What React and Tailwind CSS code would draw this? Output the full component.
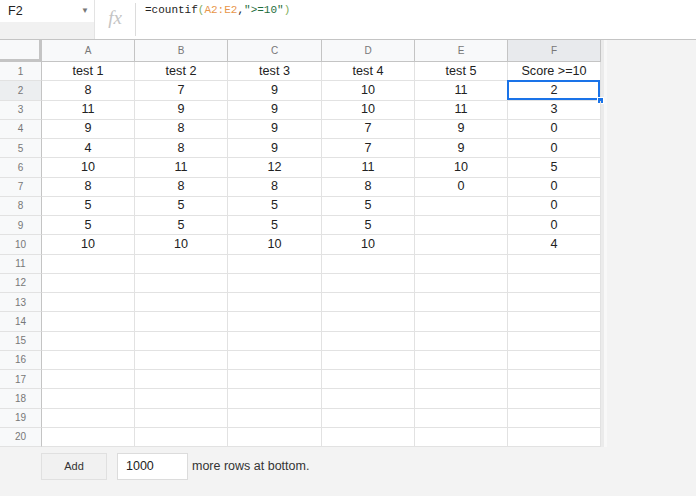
import { ChevronDown } from "lucide-react";

const columns = ["A", "B", "C", "D", "E", "F"];

const data = [
  ["test 1", "test 2", "test 3", "test 4", "test 5", "Score >=10"],
  ["8", "7", "9", "10", "11", "2"],
  ["11", "9", "9", "10", "11", "3"],
  ["9", "8", "9", "7", "9", "0"],
  ["4", "8", "9", "7", "9", "0"],
  ["10", "11", "12", "11", "10", "5"],
  ["8", "8", "8", "8", "0", "0"],
  ["5", "5", "5", "5", "", "0"],
  ["5", "5", "5", "5", "", "0"],
  ["10", "10", "10", "10", "", "4"],
];

const rows = Array.from({ length: 20 }, (_, i) => data[i] || ["", "", "", "", "", ""]);

function FormulaBar() {
  return (
    <div className="flex h-[40px] shrink-0 border-b border-[#c4c4c4] bg-white">
      <div className="flex w-[95px] flex-col border-r border-[#e3e3e3]">
        <div className="flex h-[22px] items-center justify-between pl-[8px] pr-[5px] text-[12.5px] text-[#222]">
          <span>F2</span>
          <span className="text-[8px] text-[#777]">▼</span>
        </div>
        <div className="flex-1 bg-[#f1f1f1]" />
      </div>
      <div className="flex w-[40px] items-start justify-center pt-[8px]">
        <span className="font-['Liberation_Serif',serif] text-[19px] italic leading-none text-[#c4c4c4]">fx</span>
      </div>
      <div className="my-[3px] w-px bg-[#dcdcdc]" />
      <div className="pl-[9px] pt-[3px] font-['Liberation_Mono',monospace] text-[11px] leading-[14px] text-[#222]">
        =countif<span className="text-[#7fae5d]">(</span>
        <span className="text-[#e8964a]">A2:E2</span>,
        <span className="text-[#1f6e3c]">"&gt;=10"</span>
        <span className="text-[#7fae5d]">)</span>
      </div>
    </div>
  );
}

function Grid() {
  return (
    <div className="flex">
      <div className="grid w-[601px] grid-cols-[42px_93px_93px_94px_93px_93px_93px] grid-rows-[22px_repeat(20,19.25px)] bg-white text-[12.6px] text-[#222]">
        <div className="border-b-[3px] border-r-[3px] border-[#c4c4c4] bg-[#f8f9fa]" />
        {columns.map((c) => (
          <div
            key={c}
            className={
              "flex items-center justify-center border-b border-r border-[#c4c4c4] text-[10px] text-[#777] " +
              (c === "F" ? "bg-[#e8eaed]" : "bg-[#f8f9fa]")
            }
          >
            {c}
          </div>
        ))}
        {rows.map((row, r) => [
          <div
            key={"n" + r}
            className={
              "flex items-center justify-center border-b border-r border-b-[#e2e2e2] border-r-[#c4c4c4] text-[10px] text-[#777] " +
              (r === 1 ? "bg-[#eceef0]" : "bg-[#f8f9fa]")
            }
          >
            {r + 1}
          </div>,
          ...row.map((v, c) => (
            <div
              key={r + "-" + c}
              className="relative flex items-center justify-center border-b border-r border-[#e2e2e2]"
            >
              {v}
              {r === 1 && c === 5 && (
                <>
                  <div className="absolute -left-px -top-px bottom-0 right-0 border-2 border-[#1a73e8]" />
                  <div className="absolute -bottom-[4px] -right-[4px] h-[7px] w-[7px] border border-white bg-[#1a73e8]" />
                </>
              )}
            </div>
          )),
        ])}
      </div>
      <div className="flex">
        <div className="w-[3px] bg-[#ebebeb]" />
        <div className="w-[3px] bg-[#f8f8f8]" />
      </div>
    </div>
  );
}

export default function App() {
  return (
    <div className="flex h-[496px] w-[696px] flex-col overflow-hidden bg-[#f3f3f3] font-['Liberation_Sans',Arial,sans-serif]">
      <FormulaBar />
      <Grid />
      <div className="flex items-center pl-[41px] pt-[6px]">
        <button className="h-[27px] w-[66px] border border-[#e0e0e0] bg-[#f1f1f1] text-[11px] text-[#333]">
          Add
        </button>
        <div className="ml-[10px] flex h-[27px] w-[71px] items-center border border-[#dcdcdc] bg-white pl-[8px] text-[12.5px] text-[#222]">
          1000
        </div>
        <span className="ml-[4px] text-[12.5px] text-[#333]">more rows at bottom.</span>
      </div>
    </div>
  );
}
